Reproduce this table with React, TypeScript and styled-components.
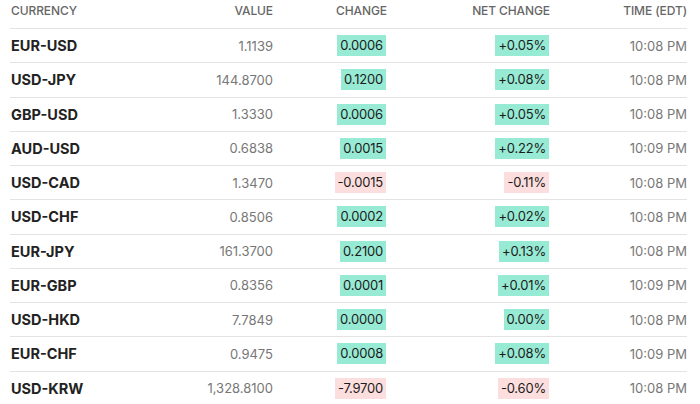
import React from "react";
import styled, { createGlobalStyle } from "styled-components";

const GlobalStyle = createGlobalStyle`
  html, body {
    margin: 0;
    padding: 0;
    background: #ffffff;
  }
  body {
    font-family: Inter, "Liberation Sans", Arial, sans-serif;
  }
`;

const RatesData = [
  { pair: "EUR-USD", value: "1.1139", change: "0.0006", net: "+0.05%", time: "10:08 PM", up: true },
  { pair: "USD-JPY", value: "144.8700", change: "0.1200", net: "+0.08%", time: "10:08 PM", up: true },
  { pair: "GBP-USD", value: "1.3330", change: "0.0006", net: "+0.05%", time: "10:08 PM", up: true },
  { pair: "AUD-USD", value: "0.6838", change: "0.0015", net: "+0.22%", time: "10:09 PM", up: true },
  { pair: "USD-CAD", value: "1.3470", change: "-0.0015", net: "-0.11%", time: "10:08 PM", up: false },
  { pair: "USD-CHF", value: "0.8506", change: "0.0002", net: "+0.02%", time: "10:08 PM", up: true },
  { pair: "EUR-JPY", value: "161.3700", change: "0.2100", net: "+0.13%", time: "10:08 PM", up: true },
  { pair: "EUR-GBP", value: "0.8356", change: "0.0001", net: "+0.01%", time: "10:09 PM", up: true },
  { pair: "USD-HKD", value: "7.7849", change: "0.0000", net: "0.00%", time: "10:08 PM", up: true },
  { pair: "EUR-CHF", value: "0.9475", change: "0.0008", net: "+0.08%", time: "10:09 PM", up: true },
  { pair: "USD-KRW", value: "1,328.8100", change: "-7.9700", net: "-0.60%", time: "10:08 PM", up: false },
];

const Table = styled.div`
  margin-left: 10px;
  width: 677px;
`;

const Row = styled.div<{ head?: boolean }>`
  display: grid;
  grid-template-columns: 163px 100px 114px 163px 137px;
  align-items: ${(p) => (p.head ? "start" : "center")};
  height: ${(p) => (p.head ? "29px" : "33.25px")};
  padding-top: ${(p) => (p.head ? "4px" : "0")};
  box-sizing: ${(p) => (p.head ? "border-box" : "content-box")};
  border-bottom: 1px solid #e3e3e3;
  &:last-child {
    border-bottom: none;
  }
`;

const HeadCell = styled.div<{ right?: boolean }>`
  font-size: 12px;
  line-height: 14px;
  font-weight: 500;
  color: #666666;
  text-align: ${(p) => (p.right ? "right" : "left")};
  padding-left: ${(p) => (p.right ? "0" : "1px")};
  letter-spacing: -0.1px;
`;

const Pair = styled.div`
  font-size: 14.5px;
  font-weight: 700;
  color: #222222;
  padding-left: 1px;
`;

const Plain = styled.div`
  font-size: 13px;
  color: #777777;
  text-align: right;
`;

const Cell = styled.div`
  display: flex;
  justify-content: flex-end;
`;

const Badge = styled.span<{ up: boolean }>`
  display: inline-block;
  background: ${(p) => (p.up ? "#97ead3" : "#fcdede")};
  color: #1c1c1c;
  font-size: 13px;
  line-height: 21px;
  padding: 0 3px;
  margin-right: 1px;
  letter-spacing: -0.2px;
`;

const App = () => {
  return (
    <>
      <GlobalStyle />
      <Table>
        <Row head>
          <HeadCell>CURRENCY</HeadCell>
          <HeadCell right>VALUE</HeadCell>
          <HeadCell right>CHANGE</HeadCell>
          <HeadCell right>NET CHANGE</HeadCell>
          <HeadCell right>TIME (EDT)</HeadCell>
        </Row>
        {RatesData.map((val) => (
          <Row key={val.pair}>
            <Pair>{val.pair}</Pair>
            <Plain>{val.value}</Plain>
            <Cell>
              <Badge up={val.up}>{val.change}</Badge>
            </Cell>
            <Cell>
              <Badge up={val.up}>{val.net}</Badge>
            </Cell>
            <Plain>{val.time}</Plain>
          </Row>
        ))}
      </Table>
    </>
  );
};

export default App;
